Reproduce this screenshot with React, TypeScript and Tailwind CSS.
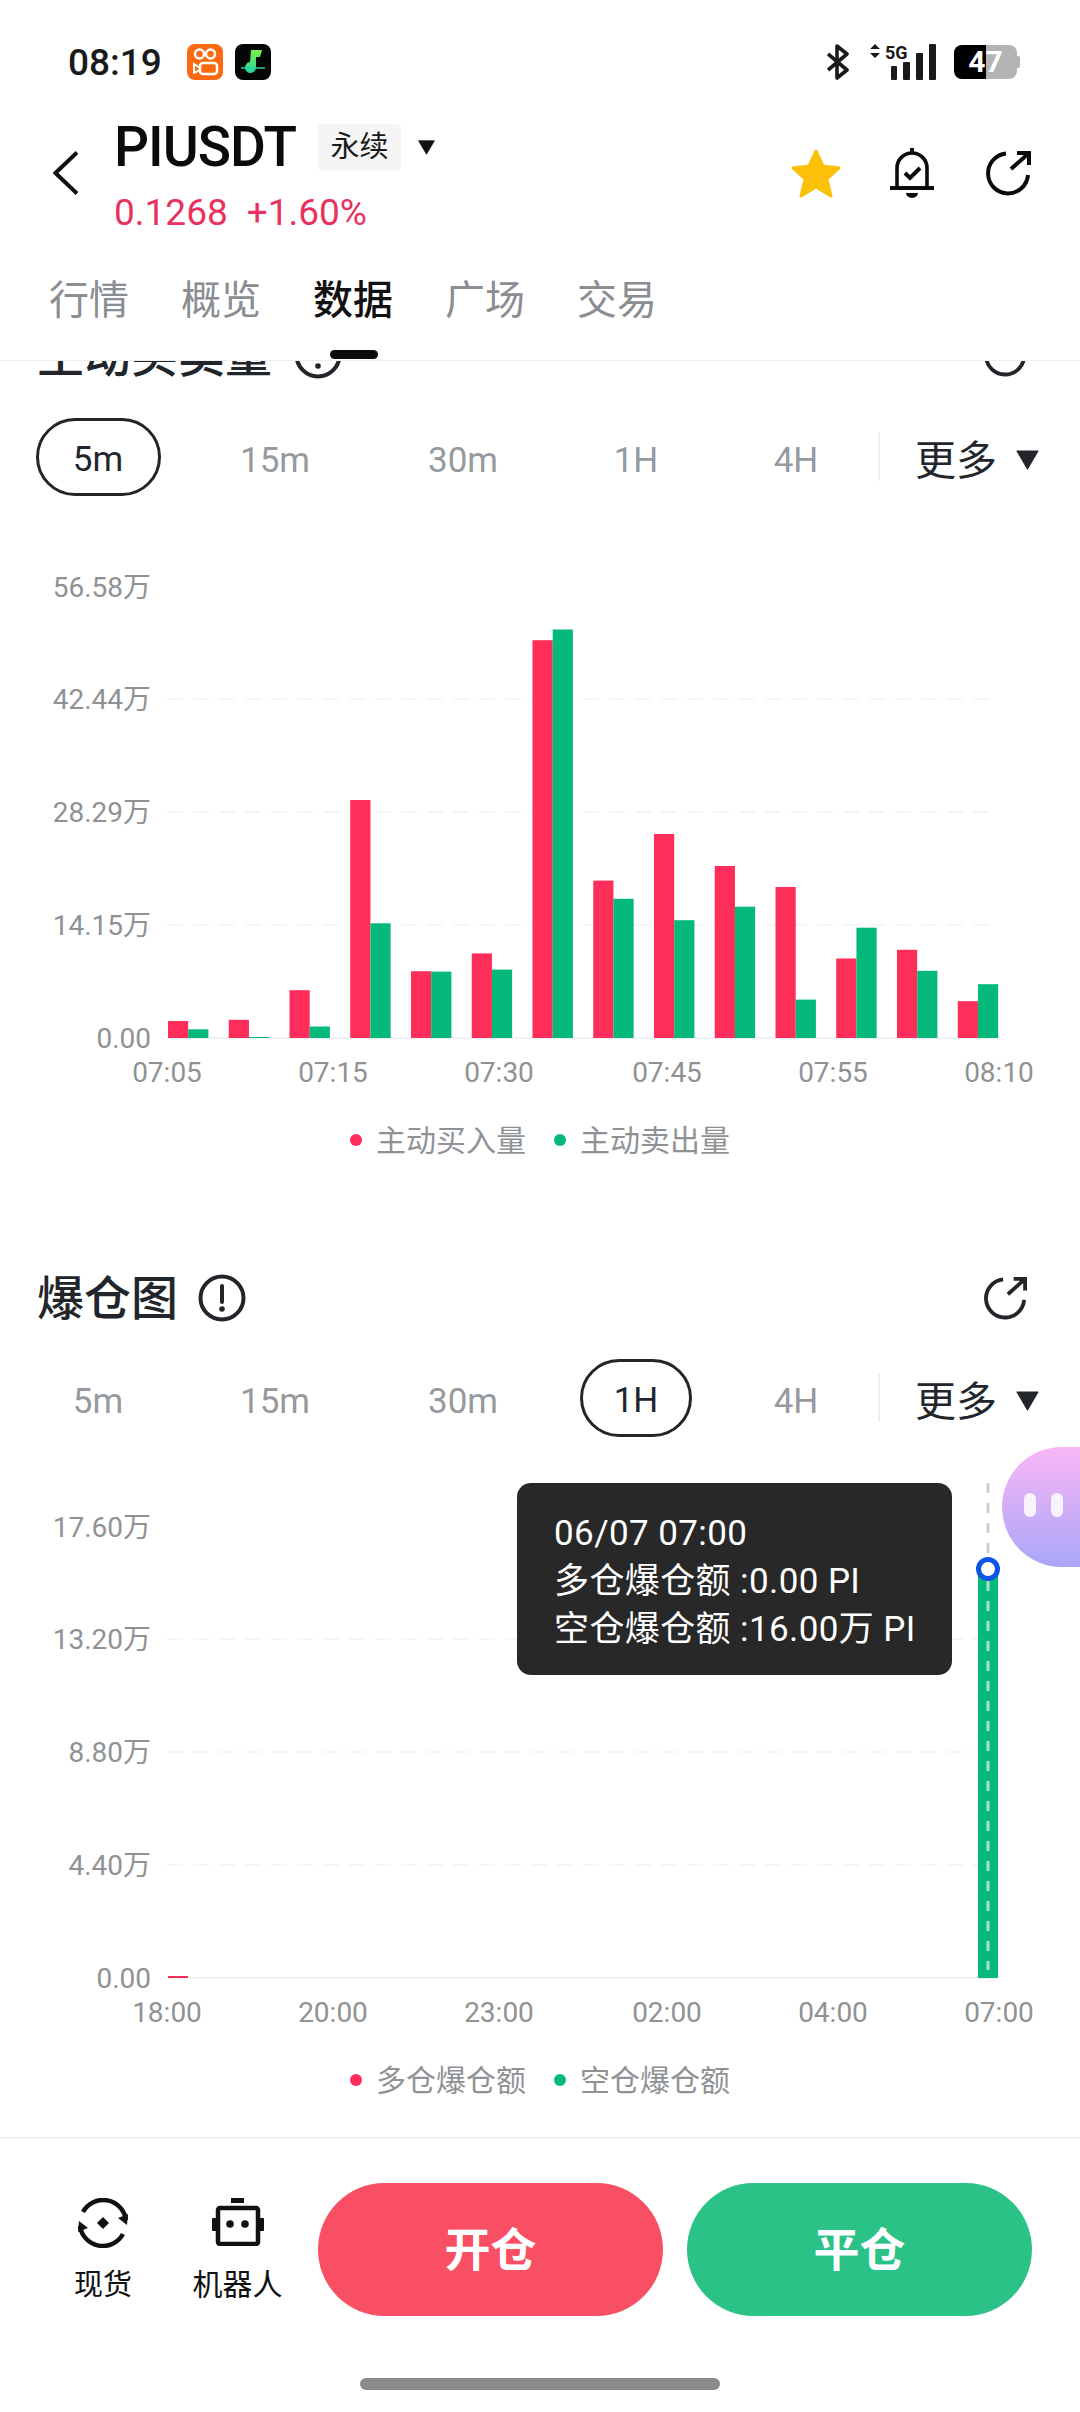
import React from 'react';

const GRAY = '#8f9295';
const barStart = 168;
const barStep = 60.75;

const volumeBars = [
  [17, 8.7], [18.2, 1], [47.8, 11.5], [238, 114.7], [66.8, 66.4], [84.6, 68.4], [397.8, 408.5],
  [157.4, 139.2], [204, 117.8], [172, 131.3], [151, 38.4], [79.5, 110.3], [88.2, 67.2], [36.8, 53.8],
];

const timeCenters = [167, 333, 499, 667, 833, 999];
const gridRows = [389, 276, 163];

function Triangle({ className }: { className: string }) {
  return (
    <svg viewBox="0 0 22 19" className={className}>
      <path d="M1 1H21L11 18Z" fill="currentColor" stroke="currentColor" strokeLinejoin="round" />
    </svg>
  );
}

function ShareIcon({ className }: { className: string }) {
  return (
    <svg viewBox="0 0 45 45" fill="none" stroke="currentColor" strokeWidth="4" className={className}>
      <path d="M20 2.5A20 20 0 1 0 42 24" />
      <path d="M25 18L43 2M31 2H43V14" />
    </svg>
  );
}

function InfoIcon() {
  return (
    <svg viewBox="0 0 48 48" fill="none" className="h-[48px] w-[48px] text-[#22262b]">
      <circle cx="24" cy="24" r="21.5" stroke="currentColor" strokeWidth="4" />
      <path d="M24 12V28" stroke="currentColor" strokeWidth="4" strokeLinecap="round" />
      <circle cx="24" cy="35" r="2.8" fill="currentColor" />
    </svg>
  );
}

function StatusBar() {
  return (
    <div className="flex h-[124px] items-center pl-[68px] pr-[60px]">
      <span className="text-[37px] font-medium leading-none text-[#1a1a1a]">08:19</span>
      <svg viewBox="0 0 36 36" className="ml-[25px] h-[36px] w-[36px]">
        <rect width="36" height="36" rx="8" fill="#fb6a10" />
        <circle cx="12.5" cy="10" r="4.5" fill="none" stroke="#fff" strokeWidth="2.5" />
        <circle cx="23.5" cy="10" r="4.5" fill="none" stroke="#fff" strokeWidth="2.5" />
        <rect x="13" y="19" width="17" height="11" rx="3" fill="none" stroke="#fff" strokeWidth="2.5" />
        <path d="M7 20L13 24V26L7 29Z" fill="none" stroke="#fff" strokeWidth="2" />
      </svg>
      <svg viewBox="0 0 36 36" className="ml-[12px] h-[36px] w-[36px]">
        <defs>
          <linearGradient id="note" x1="0" y1="0" x2="0" y2="1">
            <stop offset="0" stopColor="#7cf04a" />
            <stop offset="1" stopColor="#25d6a0" />
          </linearGradient>
        </defs>
        <rect width="36" height="36" rx="8" fill="#050505" />
        <path d="M16 6H27L25 13H21V23A5.5 5.5 0 1 1 15 18Z" fill="url(#note)" />
        <path d="M6 24H30" stroke="#25d6a0" strokeWidth="1.5" />
      </svg>
      <div className="ml-auto flex items-center">
        <svg viewBox="0 0 22 36" fill="none" stroke="#1a1a1a" strokeWidth="3.6" className="h-[36px] w-[22px]">
          <path d="M1 10L20 26L10 34V2L20 10L1 26" strokeLinejoin="round" />
        </svg>
        <svg viewBox="0 0 68 38" className="ml-[20px] h-[38px] w-[68px]">
          <path d="M1 6L6 1L11 6ZM1 10L6 15L11 10Z" fill="#1a1a1a" />
          <text x="16" y="16" className="fill-[#1a1a1a] text-[18px] font-bold">5G</text>
          <rect x="22" y="23" width="6" height="14" rx="1" fill="#1a1a1a" />
          <rect x="34" y="19" width="7" height="18" rx="1" fill="#1a1a1a" />
          <rect x="47" y="10" width="7" height="27" rx="1" fill="#1a1a1a" />
          <rect x="60" y="1" width="7" height="36" rx="1" fill="#1a1a1a" />
        </svg>
        <div className="relative ml-[17px] flex h-[34px] w-[63px] rounded-[8px] bg-[#b3b3b3]">
          <div className="h-full w-[32px] rounded-l-[8px] bg-black" />
          <span className="absolute left-0 right-0 top-0 text-center text-[30px] font-bold leading-[34px] text-white">47</span>
        </div>
        <div className="h-[12px] w-[3px] rounded-r-[2px] bg-[#b3b3b3]" />
      </div>
    </div>
  );
}

function TitleRow() {
  return (
    <div className="flex h-[110px] items-center pl-[53px] pr-[49px]">
      <svg viewBox="0 0 25 44" fill="none" stroke="#111" strokeWidth="4" className="mb-[12px] h-[44px] w-[25px]">
        <path d="M24 1.5L2.5 22L24 42.5" />
      </svg>
      <div className="mb-[3px] ml-[36px] flex flex-col">
        <div className="flex h-[48px] items-center pt-[2px]">
          <span className="text-[55px] font-medium leading-none tracking-[-1px] text-[#0b0b0b]">PIUSDT</span>
          <span className="ml-[22px] flex h-[47px] w-[83px] items-center justify-center rounded-[4px] bg-[#f5f5f5] text-[29px] text-[#1a1a1a]">永续</span>
          <Triangle className="ml-[15px] h-[15px] w-[21px] text-[#111]" />
        </div>
        <div className="mt-[22px] flex text-[37px] leading-[40px] text-[#e8325f]">
          <span>0.1268</span>
          <span className="ml-[19px]">+1.60%</span>
        </div>
      </div>
      <div className="mb-[12px] ml-auto flex items-center">
        <svg viewBox="0 0 50 49" className="h-[49px] w-[50px]">
          <path d="M25 2L32 17L48 19L36 30L40 47L25 38L10 47L14 30L2 19L18 17Z" fill="#fcc00a" stroke="#fcc00a" strokeWidth="3" strokeLinejoin="round" />
        </svg>
        <svg viewBox="0 0 44 50" fill="none" stroke="#0b0b0b" className="ml-[49px] h-[50px] w-[44px]">
          <path d="M7 40V20A15 15 0 0 1 37 20V40" strokeWidth="3.6" />
          <path d="M0 40H44" strokeWidth="4" />
          <path d="M20 2H24" strokeWidth="4" />
          <path d="M16 45H28A6 5 0 0 1 16 45Z" fill="#0b0b0b" stroke="none" />
          <path d="M15 25L20 30L30 20" strokeWidth="4" />
        </svg>
        <ShareIcon className="ml-[52px] h-[45px] w-[45px] text-[#0b0b0b]" />
      </div>
    </div>
  );
}

function Tabs() {
  const tabs = ['行情', '概览', '数据', '广场', '交易'];
  return (
    <div className="flex h-[126px] gap-[52px] pl-[49px]">
      {tabs.map((tab) => (
        <div key={tab} className="relative flex h-full items-center pt-[7px]">
          <span className={tab === '数据' ? 'text-[40px] font-medium text-[#111]' : 'text-[40px] text-[#8a8d91]'}>{tab}</span>
          {tab === '数据' && <div className="absolute bottom-[1px] left-[17px] h-[9px] w-[48px] rounded-full bg-[#0b0b0b]" />}
        </div>
      ))}
    </div>
  );
}

function Intervals({ active }: { active: string }) {
  const items = [
    { label: '5m', cell: 'w-[126px]', pill: 'w-[125px]' },
    { label: '15m', cell: 'w-[228px]', pill: 'w-[112px]' },
    { label: '30m', cell: 'w-[148px]', pill: 'w-[112px]' },
    { label: '1H', cell: 'w-[198px]', pill: 'w-[112px]' },
    { label: '4H', cell: 'w-[122px]', pill: 'w-[112px]' },
  ];
  return (
    <div className="flex h-[78px] items-center pl-[35px]">
      {items.map((item) => (
        <div key={item.label} className={`flex h-full items-center justify-center ${item.cell}`}>
          {item.label === active ? (
            <span className={`flex h-full items-center justify-center rounded-full border-[3px] border-[#22262b] pt-[6px] text-[35px] text-[#22262b] ${item.pill}`}>
              {item.label}
            </span>
          ) : (
            <span className="pt-[8px] text-[35px] text-[#96999d]">{item.label}</span>
          )}
        </div>
      ))}
      <div className="ml-[21px] h-[48px] w-[2px] bg-[#eef0f2]" />
      <span className="ml-[35px] pt-[8px] text-[41px] leading-none text-[#22262b]">更多</span>
      <Triangle className="ml-[18px] mt-[6px] h-[20px] w-[25px] text-[#22262b]" />
    </div>
  );
}

function Axes({ yLabels, xLabels }: { yLabels: string[]; xLabels: string[] }) {
  const labelY = [502, 389, 276, 163, 51];
  return (
    <>
      {gridRows.map((y) => (
        <line key={y} x1="167" x2="993" y1={y} y2={y} stroke="#f1f2f3" strokeWidth="1.5" strokeDasharray="16 10" />
      ))}
      <line x1="167" x2="998" y1="502" y2="502" stroke="#f0f2f4" strokeWidth="2" />
      {yLabels.map((label, i) => (
        <text key={label} x="151" y={labelY[i] + 10} textAnchor="end" className="text-[28px]" fill={GRAY}>
          {label}
        </text>
      ))}
      {xLabels.map((label, i) => (
        <text key={label} x={timeCenters[i]} y="546" textAnchor="middle" className="text-[28px]" fill={GRAY}>
          {label}
        </text>
      ))}
    </>
  );
}

function VolumeChart() {
  return (
    <svg viewBox="0 0 1080 564" className="mt-[40px] block h-[564px] w-[1080px]">
      <Axes
        yLabels={['0.00', '14.15万', '28.29万', '42.44万', '56.58万']}
        xLabels={['07:05', '07:15', '07:30', '07:45', '07:55', '08:10']}
      />
      {volumeBars.map(([buy, sell], i) => (
        <g key={i}>
          <rect x={barStart + barStep * i} y={502 - buy} width="20.2" height={buy} fill="#ff2d5a" />
          <rect x={barStart + barStep * i + 20.2} y={502 - sell} width="20.2" height={sell} fill="#05b97b" />
        </g>
      ))}
    </svg>
  );
}

function LiquidationChart() {
  return (
    <div className="relative mt-[39px] h-[564px] w-[1080px]">
      <svg viewBox="0 0 1080 564" className="block h-[564px] w-[1080px]">
        <Axes
          yLabels={['0.00', '4.40万', '8.80万', '13.20万', '17.60万']}
          xLabels={['18:00', '20:00', '23:00', '02:00', '04:00', '07:00']}
        />
        <rect x="168" y="500" width="20" height="2" fill="#ff2d5a" />
        <rect x="978" y="93" width="20" height="409" fill="#05b97b" />
        <line x1="988" x2="988" y1="7" y2="80" stroke="#cdcfd2" strokeWidth="3" strokeDasharray="10 10" />
        <line x1="988" x2="988" y1="105" y2="494" stroke="#a5e3cb" strokeWidth="3" strokeDasharray="10 10" />
        <circle cx="988" cy="93" r="9.5" fill="#fff" stroke="#0a55e8" strokeWidth="5" />
      </svg>
      <div className="absolute left-[517px] top-[7px] h-[192px] w-[435px] rounded-[14px] bg-[#282828] pl-[37px] pt-[27px] text-[35px] leading-[48px] tracking-[0.4px] text-white">
        <p>06/07 07:00</p>
        <p>多仓爆仓额 :0.00 PI</p>
        <p>空仓爆仓额 :16.00万 PI</p>
      </div>
    </div>
  );
}

function Legend({ left, right }: { left: string; right: string }) {
  return (
    <div className="mt-[20px] flex h-[40px] items-center pl-[350px] text-[30px] text-[#8f9295]">
      <span className="h-[12px] w-[12px] rounded-full bg-[#ff2d5a]" />
      <span className="ml-[14px]">{left}</span>
      <span className="ml-[28px] h-[12px] w-[12px] rounded-full bg-[#05b97b]" />
      <span className="ml-[14px]">{right}</span>
    </div>
  );
}

function SectionHead({ title, gap }: { title: string; gap: string }) {
  return (
    <div className="flex h-[60px] items-center pl-[37px] pr-[53px]">
      <h2 className="text-[47px] font-medium leading-none text-[#22262b]">{title}</h2>
      <div className={gap}>
        <InfoIcon />
      </div>
      <ShareIcon className="ml-auto h-[43px] w-[43px] text-[#22262b]" />
    </div>
  );
}

function BottomBar() {
  return (
    <div className="h-[275px] border-t-[2px] border-[#f0f0f0]">
      <div className="flex items-start pl-[49px] pt-[44px]">
        <div className="flex w-[108px] flex-col items-center">
          <svg viewBox="0 0 52 50" fill="none" stroke="#111" strokeWidth="4.5" className="mt-[15px] h-[50px] w-[52px]">
            <path d="M6 14A23 23 0 0 1 49 22" />
            <path d="M3 28A23 23 0 0 0 46 36" />
            <path d="M41 20L50 27L51 16Z" fill="#111" stroke="none" />
            <path d="M11 30L2 23L1 34Z" fill="#111" stroke="none" />
            <path d="M26 19L32 25L26 31L20 25Z" fill="#111" stroke="none" />
          </svg>
          <span className="mt-[17px] text-[29px] leading-[40px] text-[#111]">现货</span>
        </div>
        <div className="ml-[30px] flex w-[101px] flex-col items-center">
          <svg viewBox="0 0 52 48" fill="#111" className="mt-[15px] h-[48px] w-[52px]">
            <rect x="19" y="0" width="13" height="5" />
            <rect x="6" y="10" width="40" height="36" rx="2" fill="none" stroke="#111" strokeWidth="4.5" />
            <rect x="0" y="20" width="5" height="13" rx="1" />
            <rect x="47" y="20" width="5" height="13" rx="1" />
            <circle cx="18" cy="26" r="3.8" />
            <circle cx="33" cy="26" r="3.8" />
          </svg>
          <span className="mt-[19px] whitespace-nowrap text-[30px] leading-[40px] text-[#111]">机器人</span>
        </div>
        <button className="ml-[30px] h-[133px] w-[345px] rounded-full bg-[#f84f64] pt-[2px] text-[46px] font-bold text-white">开仓</button>
        <button className="ml-[24px] h-[133px] w-[345px] rounded-full bg-[#2bc287] pt-[2px] text-[46px] font-bold text-white">平仓</button>
      </div>
      <div className="ml-[360px] mt-[62px] h-[12px] w-[360px] rounded-full bg-[#8a8a8a]" />
    </div>
  );
}

export default function App() {
  return (
    <div className="relative flex h-[2412px] w-[1080px] flex-col overflow-hidden bg-white font-['Roboto','Noto_Sans_CJK_SC',sans-serif]">
      <header className="relative z-10 border-b-[1px] border-[#eeeeee] bg-white">
        <StatusBar />
        <TitleRow />
        <Tabs />
      </header>

      <main className="min-h-0 flex-1 overflow-hidden">
        {/* Scrolled content, first heading sits half under the header */}
        <div className="-mt-[36px]">
          <SectionHead title="主动买卖量" gap="ml-[22px]" />
        </div>
        <div className="mt-[33px]">
          <Intervals active="5m" />
        </div>
        <VolumeChart />
        <Legend left="主动买入量" right="主动卖出量" />

        <div className="mt-[108px]">
          <SectionHead title="爆仓图" gap="ml-[20px]" />
        </div>
        <div className="mt-[31px]">
          <Intervals active="1H" />
        </div>
        <LiquidationChart />
        <Legend left="多仓爆仓额" right="空仓爆仓额" />
      </main>

      <BottomBar />

      {/* Floating assistant */}
      <div className="absolute left-[1002px] top-[1447px] flex h-[120px] w-[78px] gap-[15px] rounded-l-[60px] bg-gradient-to-b from-[#f9b6f5] to-[#a9a5f9] pl-[22px] pt-[46px]">
        <div className="h-[24px] w-[12px] rounded-full bg-white/85" />
        <div className="h-[24px] w-[12px] rounded-full bg-white/85" />
      </div>
    </div>
  );
}
